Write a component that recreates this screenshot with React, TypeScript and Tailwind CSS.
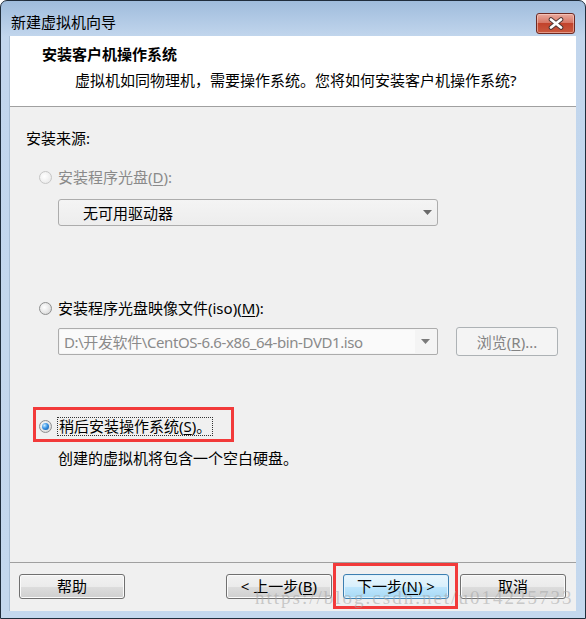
import React from "react";

const FONT = '"Noto Sans", "Noto Sans CJK SC", sans-serif';

function Radio({ checked = false, disabled = false }: { checked?: boolean; disabled?: boolean }) {
  if (disabled) {
    return (
      <div className="w-[13px] h-[13px] rounded-full border border-[#c6c6c6] bg-[radial-gradient(circle_at_40%_40%,#ffffff,#efefef_60%,#e2e2e2)] flex items-center justify-center shrink-0" />
    );
  }
  return (
    <div className="w-[13px] h-[13px] rounded-full border border-[#8e8f8f] bg-[radial-gradient(circle_at_40%_40%,#ffffff,#e6e6e6_55%,#c9c9c9)] flex items-center justify-center shrink-0">
      {checked && (
        <div className="w-[7px] h-[7px] rounded-full bg-[radial-gradient(circle_at_35%_35%,#c9ebff,#3a95e6_45%,#0b4a91)]" />
      )}
    </div>
  );
}

function Arrow({ color = "#6d6d6d" }: { color?: string }) {
  return (
    <svg width="9" height="5" viewBox="0 0 9 5">
      <path d="M0 0 H9 L4.5 5 Z" fill={color} />
    </svg>
  );
}

function U({ children }: { children: React.ReactNode }) {
  return <span className="underline underline-offset-[2px] decoration-1">{children}</span>;
}

function Btn({ children, primary = false }: { children: React.ReactNode; primary?: boolean }) {
  return (
    <div
      className={
        primary
          ? "w-[106px] h-[25px] rounded-[3px] border border-[#3c7fb1] bg-[linear-gradient(#eaf6fd_0%,#d9f0fc_50%,#bee6fd_51%,#a7d9f5_100%)] flex items-center justify-center text-[15px] text-black shadow-[inset_0_0_0_1px_#e0f2fc]"
          : "w-[106px] h-[25px] rounded-[3px] border border-[#707070] bg-[linear-gradient(#f2f2f2_0%,#ebebeb_50%,#dddddd_51%,#cfcfcf_100%)] flex items-center justify-center text-[15px] text-black shadow-[inset_0_0_0_1px_#fbfbfb]"
      }
    >
      {children}
    </div>
  );
}

export default function App() {
  return (
    <div className="w-[586px] h-[619px] relative overflow-hidden bg-white" style={{ fontFamily: FONT }}>
      <div className="w-[586px] h-[619px] rounded-t-[7px] border border-[#1f2d3c] bg-[linear-gradient(#9fbcdc_0px,#c2d6ed_36px,#c4d8ee_100%)] flex flex-col">
        {/* Title bar */}
        <div className="h-[35px] flex items-center justify-between pl-[10px] pr-[10px] relative shrink-0">
          <span className="text-[15px] text-black leading-[20px] mt-[6px]">新建虚拟机向导</span>
          <div className="w-[39px] h-[21px] mt-[9px] rounded-[3px] border border-[#6e2a23] bg-[linear-gradient(#e9aa9e_0%,#d77766_45%,#c2432c_50%,#c9593f_100%)] flex items-center justify-center shadow-[inset_0_0_0_1px_rgba(255,220,210,0.5)]">
            <svg width="16" height="13" viewBox="0 0 16 13">
              <path d="M3 2.5 L13 10.5 M13 2.5 L3 10.5" stroke="#4b3533" strokeWidth="4.6" strokeLinecap="round" />
              <path d="M3 2.5 L13 10.5 M13 2.5 L3 10.5" stroke="#ffffff" strokeWidth="2.8" strokeLinecap="round" />
            </svg>
          </div>
        </div>

        {/* Client area */}
        <div className="flex-1 ml-[8px] mr-[9px] mb-[7px] flex flex-col bg-[#f0f0f0] border-l border-[#a9bfd6]">
          {/* Header */}
          <div className="h-[71px] bg-white border-b border-[#a0a0a0] shrink-0 flex flex-col">
            <div className="mt-[8px] pl-[32px] text-[15px] leading-[20px] font-bold text-black">安装客户机操作系统</div>
            <div className="mt-[6px] pl-[65px] text-[15px] leading-[20px] text-black">
              虚拟机如同物理机，需要操作系统。您将如何安装客户机操作系统?
            </div>
          </div>

          {/* Content */}
          <div className="flex-1 flex flex-col text-[15px] leading-[20px]">
            <div className="mt-[21px] pl-[16px] h-[20px] text-black">安装来源:</div>

            <div className="mt-[19px] pl-[29px] h-[20px] flex items-center gap-[6px] text-[#8a8a8a]">
              <Radio disabled />
              <span>
                安装程序光盘(<U>D</U>):
              </span>
            </div>

            <div className="mt-[12px] ml-[48px] w-[380px] h-[27px] rounded-[3px] border border-[#acacac] bg-[linear-gradient(#f4f4f4,#ededed)] flex items-center justify-between pl-[24px] pr-[5px] text-black">
              <span>无可用驱动器</span>
              <Arrow color="#6a6a6a" />
            </div>

            <div className="mt-[72px] pl-[29px] h-[20px] flex items-center gap-[6px] text-black">
              <Radio />
              <span>
                安装程序光盘映像文件(iso)(<U>M</U>):
              </span>
            </div>

            <div className="mt-[9px] ml-[48px] h-[29px] flex items-center gap-[18px]">
              <div className="w-[380px] h-[27px] rounded-[2px] border border-[#acacac] bg-[#f4f4f4] flex items-center p-[1px]">
                <div className="flex-1 h-[23px] bg-[#fafafa] flex items-center pl-[4px] text-[#8a8a8a] overflow-hidden whitespace-nowrap tracking-[-0.4px]">
                  D:\开发软件\CentOS-6.6-x86_64-bin-DVD1.iso
                </div>
                <div className="w-[21px] flex items-center justify-center">
                  <Arrow color="#7a7a7a" />
                </div>
              </div>
              <div className="w-[102px] h-[29px] rounded-[3px] border border-[#adb2b5] bg-[#f4f4f4] flex items-center justify-center text-[#838383]">
                浏览(<U>R</U>)...
              </div>
            </div>

            <div className="mt-[60px] pl-[29px] h-[20px] flex items-center gap-[5px] text-black relative">
              <Radio checked />
              <span className="border border-dotted border-[#333] px-[1px] leading-[17px]">
                稍后安装操作系统(<U>S</U>)。
              </span>
              <div className="absolute left-[23px] top-[-9px] w-[201px] h-[35px] border-[3px] border-[#f23a3a] pointer-events-none" />
            </div>

            <div className="mt-[12px] pl-[48px] h-[20px] text-black">创建的虚拟机将包含一个空白硬盘。</div>
          </div>

          {/* Footer */}
          <div className="shrink-0 border-t border-[#a0a0a0] relative">
            <div className="mt-[11px] mb-[12px] flex items-center pl-[9px] pr-[10px]">
              <Btn>帮助</Btn>
              <div className="flex-1" />
              <Btn>
                &lt; 上一步(<U>B</U>)
              </Btn>
              <div className="w-[11px]" />
              <Btn primary>
                下一步(<U>N</U>) &gt;
              </Btn>
              <div className="w-[11px]" />
              <Btn>取消</Btn>
            </div>
            <div className="absolute left-[323px] top-[0px] w-[125px] h-[46px] border-[3px] border-[#f23a3a] pointer-events-none" />
          </div>
        </div>
      </div>

      {/* Watermark */}
      <div
        className="absolute left-[255px] top-[588px] text-[19px] leading-[19px] tracking-[2px] text-[rgba(165,165,165,0.55)] pointer-events-none whitespace-nowrap"
        style={{ fontFamily: '"Liberation Serif", serif' }}
      >
        https://blog.csdn.net/u014225733
      </div>
    </div>
  );
}
